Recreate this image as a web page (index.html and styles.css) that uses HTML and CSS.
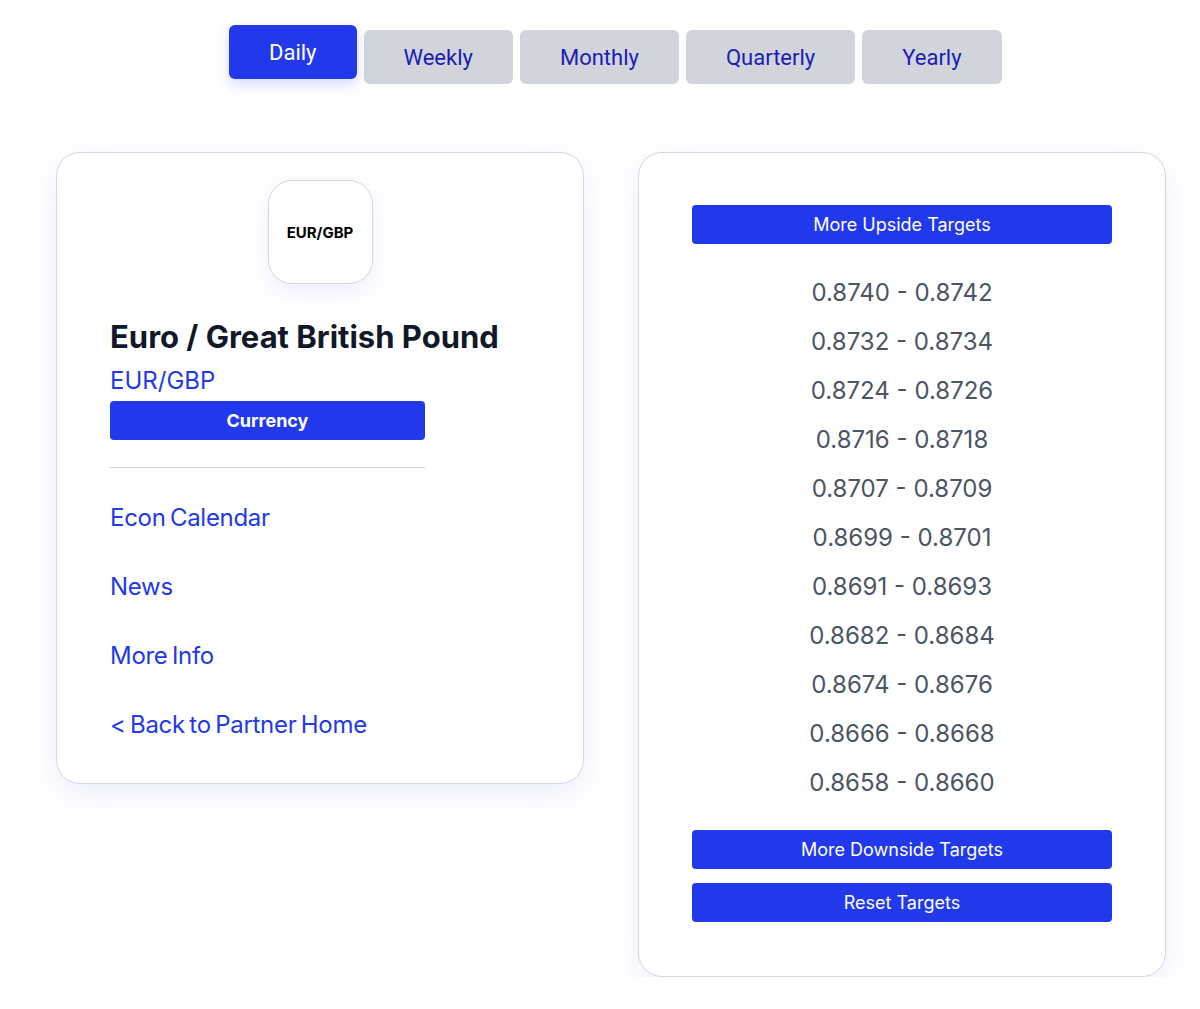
FILE: index.html
```html
<!DOCTYPE html>
<html lang="en">
<head>
    <meta charset="UTF-8">
    <meta name="viewport" content="width=device-width, initial-scale=1.0">
    <title>EUR/GBP Targets</title>
    <link rel="stylesheet" href="styles.css">
</head>
<body>
    <div class="tabs">
        <button class="tab active">Daily</button>
        <button class="tab">Weekly</button>
        <button class="tab">Monthly</button>
        <button class="tab">Quarterly</button>
        <button class="tab">Yearly</button>
    </div>

    <div class="cards">
        <div class="card info-card">
            <div class="logo-box">EUR/GBP</div>
            <h1 class="pair-name">Euro / Great British Pound</h1>
            <div class="pair-code">EUR/GBP</div>
            <div class="badge">Currency</div>
            <hr class="divider">
            <ul class="links">
                <li><a href="#">Econ Calendar</a></li>
                <li><a href="#">News</a></li>
                <li><a href="#">More Info</a></li>
                <li><a href="#">&lt; Back to Partner Home</a></li>
            </ul>
        </div>

        <div class="card targets-card">
            <button class="btn">More Upside Targets</button>
            <ul class="targets">
                <li>0.8740 - 0.8742</li>
                <li>0.8732 - 0.8734</li>
                <li>0.8724 - 0.8726</li>
                <li>0.8716 - 0.8718</li>
                <li>0.8707 - 0.8709</li>
                <li>0.8699 - 0.8701</li>
                <li>0.8691 - 0.8693</li>
                <li>0.8682 - 0.8684</li>
                <li>0.8674 - 0.8676</li>
                <li>0.8666 - 0.8668</li>
                <li>0.8658 - 0.8660</li>
            </ul>
            <button class="btn">More Downside Targets</button>
            <button class="btn">Reset Targets</button>
        </div>
    </div>
</body>
</html>
```

FILE: styles.css
```css
:root {
    --blue: #2239eb;
    --ink: #111827;
    --gray: #4b5563;
    --line: #d1d5db;
}

* {
    box-sizing: border-box;
}

body {
    margin: 0;
    font-family: 'Inter', 'Lato', sans-serif;
    background: #fff;
    color: var(--ink);
}

.tabs {
    display: flex;
    gap: 7px;
    padding: 30px 0 0 229px;
    height: 84px;
}

.tab {
    font-family: 'Roboto', 'Inter', sans-serif;
    font-size: 22px;
    height: 54px;
    padding: 0 40px;
    border: none;
    border-radius: 6px;
    background: #d1d5db;
    color: #1c1cb4;
    cursor: pointer;
}

.tab.active {
    background: var(--blue);
    color: #fff;
    transform: translateY(-5px);
    box-shadow: 0 6px 14px rgba(34,57,235,0.18);
}

.cards {
    display: grid;
    grid-template-columns: 528px 528px;
    gap: 54px;
    align-items: start;
    margin: 68px 0 0 56px;
}

.card {
    background: #fff;
    border: 1px solid #d4d6de;
    border-radius: 24px;
    box-shadow: 0 10px 30px rgba(79,90,230,0.10);
}

.info-card {
    padding: 27px 53px 43px;
}

.logo-box {
    width: 105px;
    height: 104px;
    margin: 0 auto;
    border: 1px solid #d4d6de;
    border-radius: 24px;
    box-shadow: 0 8px 24px rgba(79,90,230,0.10);
    display: flex;
    align-items: center;
    justify-content: center;
    font-size: 15px;
    font-weight: 700;
    color: #000;
}

.pair-name {
    margin: 33px 0 0;
    font-size: 31px;
    font-weight: 700;
    line-height: 40px;
    white-space: nowrap;
}

.pair-code {
    margin-top: 9px;
    font-size: 24px;
    line-height: 30px;
    color: var(--blue);
}

.badge {
    margin-top: 5px;
    width: 315px;
    height: 39px;
    line-height: 39px;
    border-radius: 4px;
    background: var(--blue);
    color: #fff;
    font-size: 18px;
    font-weight: 700;
    text-align: center;
}

.divider {
    width: 315px;
    margin: 27px 0 0;
    border: none;
    border-top: 1px solid var(--line);
}

.links {
    list-style: none;
    margin: 35px 0 0;
    padding: 0;
    display: flex;
    flex-direction: column;
    gap: 39px;
}

.links a {
    font-size: 24px;
    line-height: 30px;
    letter-spacing: -0.3px;
    word-spacing: -2px;
    color: var(--blue);
    text-decoration: none;
}

.targets-card {
    padding: 52px 53px 54px;
}

.btn {
    display: block;
    width: 100%;
    height: 39px;
    border: none;
    border-radius: 4px;
    background: var(--blue);
    color: #fff;
    font-family: inherit;
    font-size: 18px;
    cursor: pointer;
}

.btn + .btn {
    margin-top: 14px;
}

.targets {
    list-style: none;
    margin: 24px 0 23px;
    padding: 0;
    text-align: center;
}

.targets li {
    font-size: 24px;
    line-height: 49px;
    color: var(--gray);
}
```
